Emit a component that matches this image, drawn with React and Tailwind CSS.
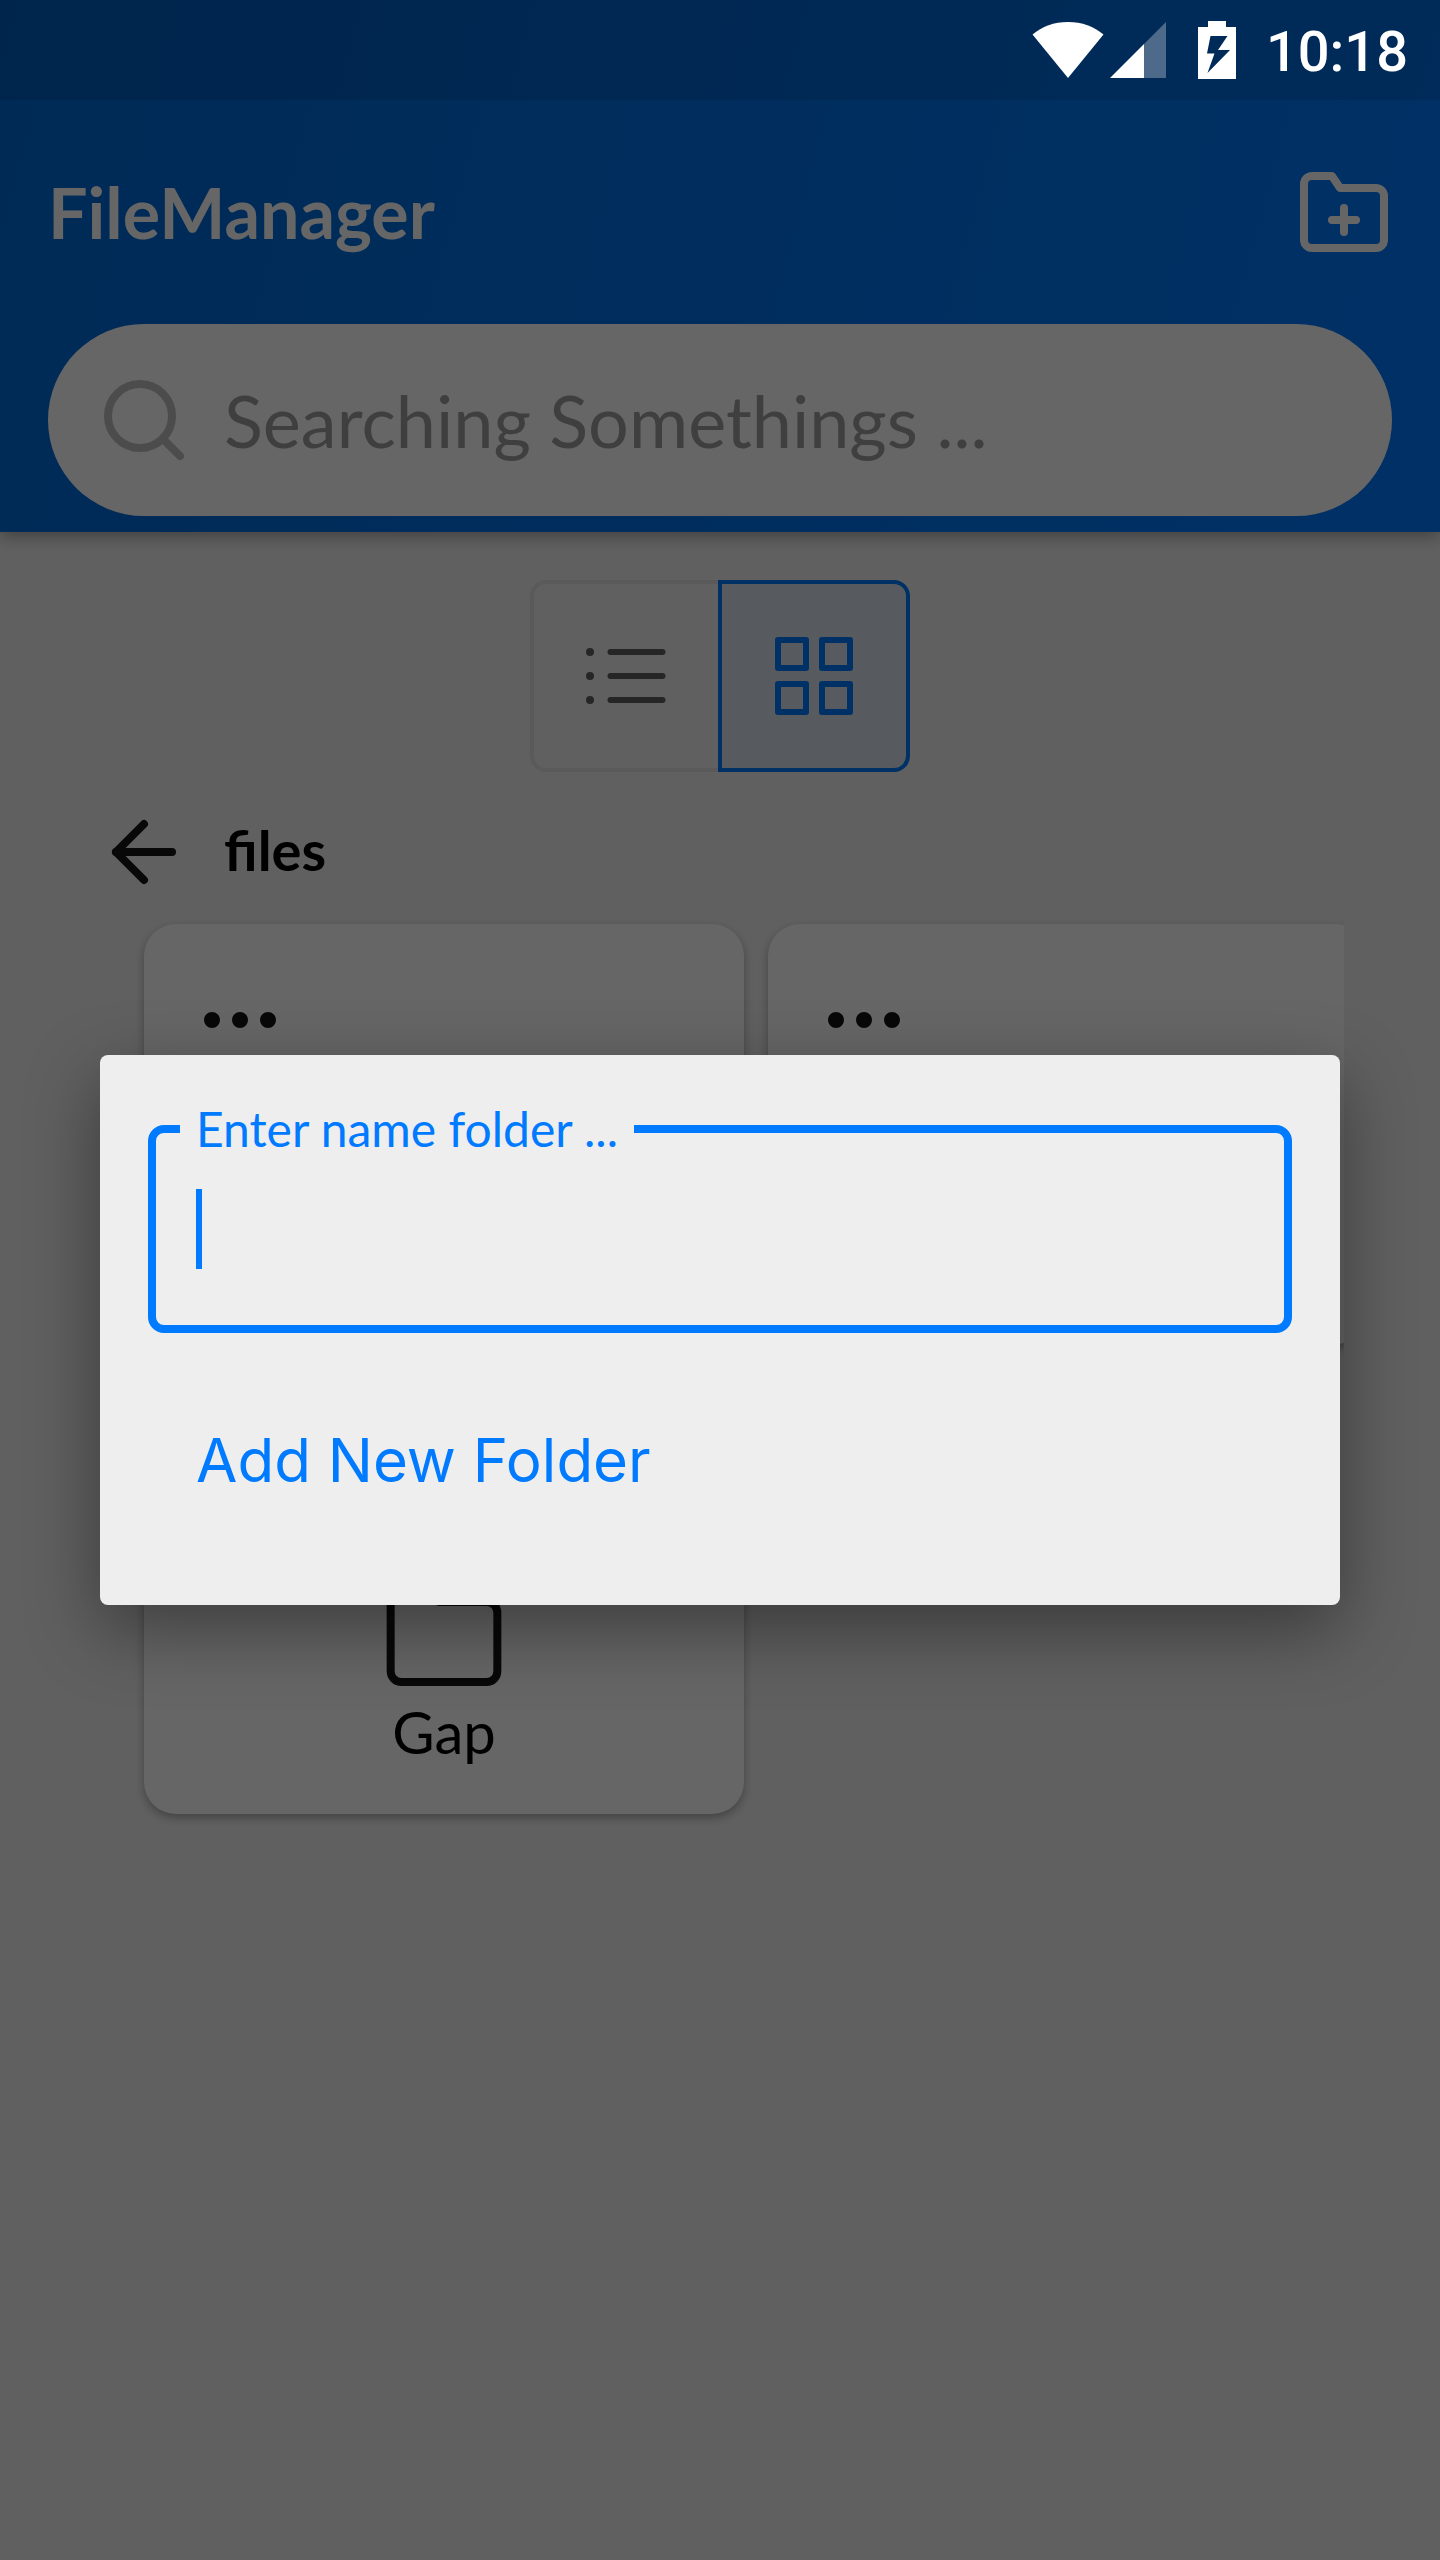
import React from "react";
import { FiArrowLeft, FiFolder, FiFolderPlus, FiMoreHorizontal, FiSearch } from "react-icons/fi";

const items = [{ id: 1 }, { id: 2 }, { id: 3, name: "Gap" }];

function WifiIcon() {
  return (
    <svg className="h-14 w-[72px]" viewBox="0 0 72 56" fill="#fff" aria-hidden="true">
      <path d="M36 56 0.5 12.5C10 4.500 22 0 36 0s26 4.500 35.500 12.500z" />
    </svg>
  );
}

function SignalIcon() {
  return (
    <svg className="h-14 w-14" viewBox="0 0 56 56" fill="#fff" aria-hidden="true">
      <path d="M34 22 56 0v56H34z" opacity="0.3" />
      <path d="M0 56 34 22v34z" />
    </svg>
  );
}

function BatteryIcon() {
  return (
    <svg className="h-[58px] w-[38px]" viewBox="0 0 38 58" fill="#fff" aria-hidden="true">
      <path
        fillRule="evenodd"
        d="M10 0h18v6h10v52H0V6h10zM12.500 15 9 32.500h7.500L9.500 52 32 29H20l9.500-14z"
      />
    </svg>
  );
}

function ListIcon() {
  return (
    <svg className="h-20 w-20" viewBox="0 0 80 80" fill="none" stroke="#5f5f5f" strokeWidth="6" strokeLinecap="round" aria-hidden="true">
      <path d="M24.500 16h52M24.500 40h52M24.500 64h52" />
      <g fill="#5f5f5f" stroke="none">
        <circle cx="4" cy="16" r="4" />
        <circle cx="4" cy="40" r="4" />
        <circle cx="4" cy="64" r="4" />
      </g>
    </svg>
  );
}

function GridIcon() {
  return (
    <svg className="h-20 w-20" viewBox="0 0 80 80" fill="none" stroke="#007aff" strokeWidth="6" strokeLinejoin="round" aria-hidden="true">
      <path d="M4 4h28v28H4zM48 4h28v28H48zM4 48h28v28H4zM48 48h28v28H48z" />
    </svg>
  );
}

function FileCard({ name }) {
  return (
    <article className="flex flex-col rounded-[32px] bg-white p-12 shadow-[0_4px_10px_rgba(0,0,0,0.3)]">
      <button type="button" aria-label="More options" className="self-start">
        <FiMoreHorizontal className="size-24 text-[#141414]" />
      </button>
      <FiFolder className="mt-8 size-32 self-center text-[#141414]" strokeWidth={1.5} />
      <p className="min-h-[68px] text-center text-[58px] leading-[68px] text-black">{name}</p>
    </article>
  );
}

function StatusBar() {
  return (
    <div className="flex h-[100px] shrink-0 items-center justify-end bg-black/10 pr-8">
      <WifiIcon />
      <span className="ml-1.5">
        <SignalIcon />
      </span>
      <span className="ml-8">
        <BatteryIcon />
      </span>
      <span className="ml-[30px] pt-1 font-['Roboto',sans-serif] text-[56px] leading-[64px] font-medium text-white">10:18</span>
    </div>
  );
}

function NewFolderDialog() {
  return (
    <form
      role="dialog"
      aria-label="New folder"
      onSubmit={(e) => e.preventDefault()}
      className="mx-[100px] w-full rounded-lg bg-[#eeeeee] px-12 pt-12 pb-[109px] text-[#007aff] shadow-[0_24px_72px_rgba(0,0,0,0.4)]"
    >
      <fieldset className="rounded-2xl border-8 border-[#007aff] px-6 pb-14">
        <legend className="px-4 text-[48px] leading-[52px]">
          <label htmlFor="folder-name">Enter name folder ...</label>
        </legend>
        <div className="mt-[34px] flex items-center px-4">
          <span className="h-20 w-1.5 bg-[#007aff]" />
          <input id="folder-name" className="h-20 min-w-0 flex-1 bg-transparent text-[64px] caret-transparent outline-none" />
        </div>
      </fieldset>
      <button type="submit" className="mt-[91px] px-12 font-['Inter',sans-serif] text-[60px] leading-[72px]">
        Add New Folder
      </button>
    </form>
  );
}

export default function App() {
  return (
    <div className="relative flex min-h-screen flex-col overflow-hidden bg-[#f0f0f0] font-['Lato',sans-serif]">
      <header className="relative bg-[linear-gradient(105deg,#006ad6,#007aff)] px-12 pt-[164px] pb-4 shadow-[0_4px_16px_rgba(0,0,0,0.35)]">
        <div className="flex items-center justify-between">
          <h1 className="text-[70px] leading-[92px] font-bold text-white">FileManager</h1>
          <button type="button" aria-label="New folder">
            <FiFolderPlus className="size-24 text-white" />
          </button>
        </div>
        <label className="mt-16 flex h-48 items-center gap-8 rounded-full bg-white px-12">
          <FiSearch className="size-24 shrink-0 text-[#bebebe]" />
          <input
            type="search"
            aria-label="Search"
            placeholder="Searching Somethings ..."
            className="min-w-0 flex-1 bg-transparent text-[72px] leading-[96px] outline-none placeholder:text-[#9e9e9e]"
          />
        </label>
      </header>

      <main className="flex flex-col pt-12">
        <div className="flex justify-center">
          <button type="button" aria-label="List view" className="flex size-48 items-center justify-center rounded-l-2xl border-4 border-[#e1e1e1]">
            <ListIcon />
          </button>
          <button type="button" aria-label="Grid view" aria-pressed="true" className="-ml-1 flex size-48 items-center justify-center rounded-r-2xl border-4 border-[#007aff] bg-[#dae1ee]">
            <GridIcon />
          </button>
        </div>

        <nav className="mt-8 flex items-center gap-8 px-24">
          <button type="button" aria-label="Back">
            <FiArrowLeft className="size-24 text-[#141414]" />
          </button>
          <h2 className="pb-1 text-[56px] leading-[64px] font-bold text-black">files</h2>
        </nav>

        <section aria-label="Files" className="mx-24 overflow-hidden pt-6 pb-12 pl-12">
          <div className="grid grid-cols-[50%_50%] gap-x-6 gap-y-[50px]">
            {items.map((item) => (
              <FileCard key={item.id} name={item.name} />
            ))}
          </div>
        </section>
      </main>

      <div className="absolute inset-0 flex flex-col bg-black/60">
        <StatusBar />
        <div className="flex flex-1 items-center">
          <NewFolderDialog />
        </div>
      </div>
    </div>
  );
}
